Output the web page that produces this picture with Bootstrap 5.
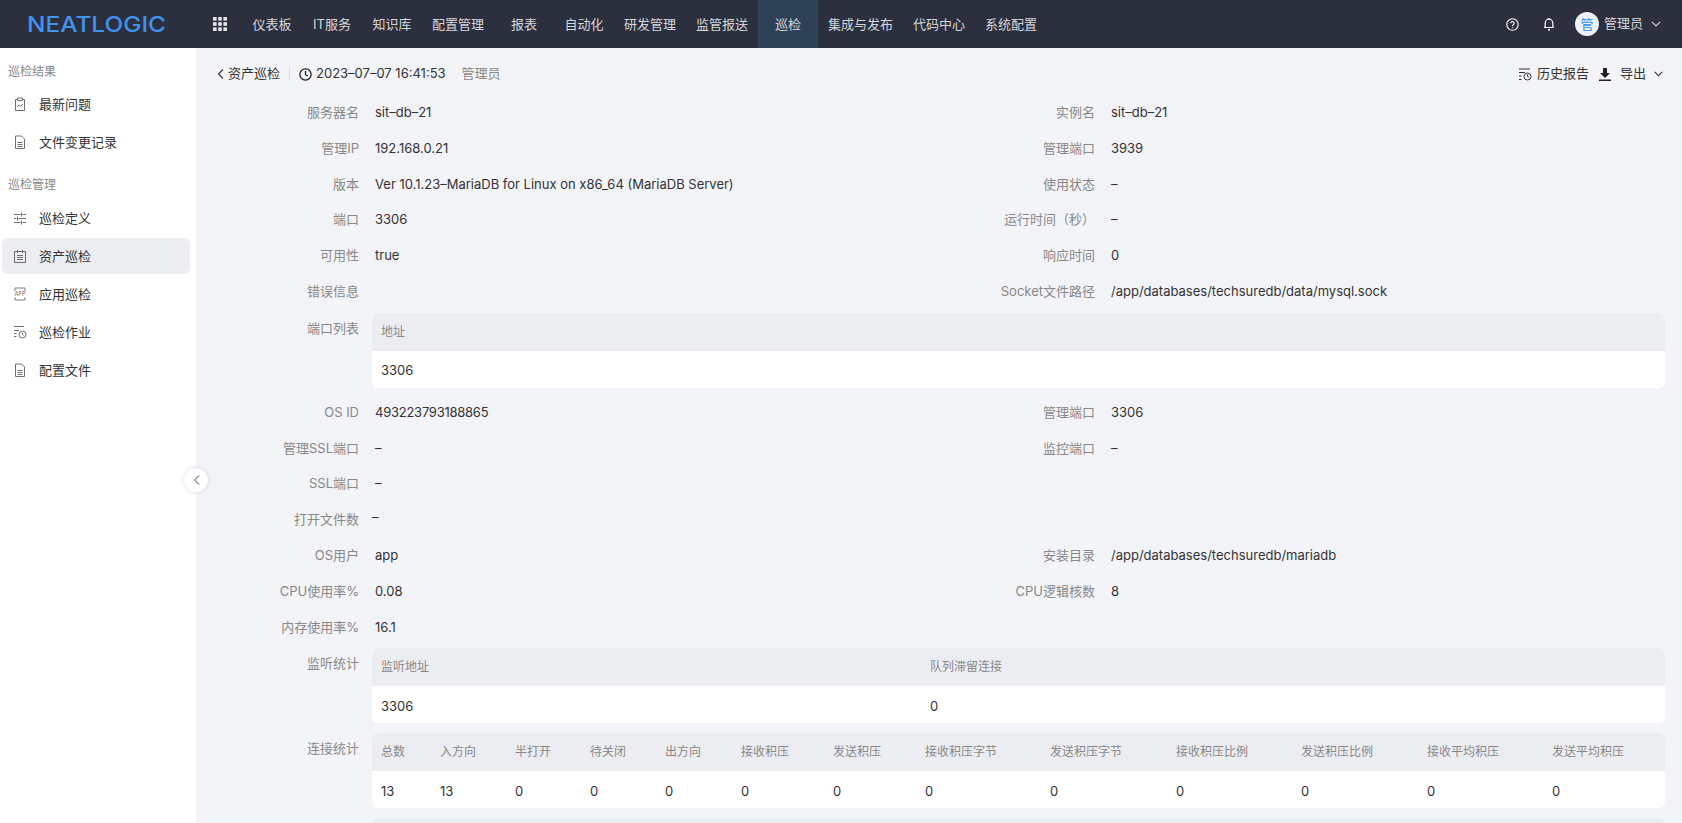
<!DOCTYPE html>
<html lang="zh-CN">
<head>
<meta charset="utf-8">
<title>资产巡检</title>
<link href="https://cdn.jsdelivr.net/npm/bootstrap@5.3.0/dist/css/bootstrap.min.css" rel="stylesheet">
<style>
html,body{height:100%;overflow:hidden}
body{font-family:Inter,"Noto Sans CJK SC",sans-serif;font-size:13px;color:#333;background:#f3f4f8;line-height:1.5}
svg{display:block;flex:none}
.topbar{height:48px;background:#2c2f3e;color:#d6d7db;padding:0}
.logo-box{width:196px;padding-left:27px}
.logo-text{font-family:Inter,sans-serif;font-size:22px;font-weight:500;fill:#4193ee}
.grid-ico{width:46px;padding-left:17px}
.topitem{min-width:60px;padding:0 10px;height:48px;line-height:48px;text-align:center;color:#d6d7db;text-decoration:none;white-space:nowrap}
.topitem.on{background:#2f4156}
.top-right{margin-left:auto;padding-right:21px}
.av{width:24px;height:24px;border-radius:50%;background:#eef1f5;color:#2d8cf0;text-align:center;line-height:24px;margin-left:20px;margin-right:5px}
.shell{height:775px}
.sidebar{width:196px;flex:none;background:#fff;padding:0 6px 0 2px;position:relative}
.side-head{color:#888;font-size:12px;padding-left:6px;line-height:18px;padding-top:1px}
.side-head.a{margin-top:14px;margin-bottom:5px}
.side-head.b{margin-top:15px;margin-bottom:6px}
.side-link{display:flex;align-items:center;height:36px;margin-bottom:2px;padding-left:11px;gap:8px;color:#333;text-decoration:none;border-radius:6px}
.side-link.on{background:#ecedf1}
.side-link svg{color:#6f6f6f}
.side-text{margin-left:4px;padding-top:1px}
.app-mark{font-family:Inter,sans-serif;font-size:5.5px;fill:currentColor}
.fold{position:absolute;right:-12px;top:420px;width:24px;height:24px;background:#fff;border-radius:50%;box-shadow:0 0 5px rgba(0,0,0,.15);display:flex;align-items:center;justify-content:center}
.mainpane{flex:1;min-width:0;padding:0 5px 0 9px}
.subbar{height:50px;padding:2px 14px 0 12px}
.back{gap:4px}
.sep{width:1px;height:14px;background:#dcdde2;margin:0 9px}
.muted-x{color:#888}
.tool{gap:5px}
.export{margin-left:10px}
.long-num{letter-spacing:-.25px}
.kv{height:35.8px;display:flex;white-space:nowrap}
.kv-label{width:154px;text-align:right;color:#888;line-height:28px;flex:none}
.kv-value{margin-left:16px;line-height:28px}
.kv-value.tight{margin-left:13px;line-height:24px}
.kv-wide{display:flex;margin-bottom:10px}
.kv-wide .kv-label{line-height:30px}
.tbl-wrap{flex:1;margin:0 12px 0 13px;border-radius:6px;overflow:hidden;background:#fff;min-width:0}
.tbl-wrap .table{margin:0;--bs-table-bg:transparent;font-size:13px;color:#333;table-layout:fixed}
.tbl-wrap th{background:#ecedf1;height:38px;font-weight:400;font-size:12px;color:#888;padding:0 9px;border:0;vertical-align:middle;white-space:nowrap}
.tbl-wrap td{height:37px;padding:3px 9px 0;border:0;vertical-align:middle;color:#333;background:#fff}
.listen-tbl th:nth-child(1){width:549px}
.conn-tbl th:nth-child(1){width:59px}
.conn-tbl th:nth-child(2),.conn-tbl th:nth-child(3),.conn-tbl th:nth-child(4){width:75px}
.conn-tbl th:nth-child(5){width:76px}
.conn-tbl th:nth-child(6),.conn-tbl th:nth-child(7){width:92px}
.conn-tbl th:nth-child(8),.conn-tbl th:nth-child(10),.conn-tbl th:nth-child(12){width:125px}
.conn-tbl th:nth-child(9),.conn-tbl th:nth-child(11){width:126px}
</style>
</head>
<body>
<nav class="navbar topbar navbar-expand flex-nowrap">
  <div class="logo-box">
    <svg width="150" height="32" viewBox="0 0 150 32"><text class="logo-text" x="0" y="24" textLength="139" lengthAdjust="spacingAndGlyphs">NEATLOGIC</text></svg>
  </div>
  <div class="grid-ico">
    <svg width="14" height="14" viewBox="0 0 14 14" fill="#e6e7ea"><rect width="3.6" height="3.6"/><rect x="5.2" width="3.6" height="3.6"/><rect x="10.4" width="3.6" height="3.6"/><rect y="5.2" width="3.6" height="3.6"/><rect x="5.2" y="5.2" width="3.6" height="3.6"/><rect x="10.4" y="5.2" width="3.6" height="3.6"/><rect y="10.4" width="3.6" height="3.6"/><rect x="5.2" y="10.4" width="3.6" height="3.6"/><rect x="10.4" y="10.4" width="3.6" height="3.6"/></svg>
  </div>
  <div class="d-flex">
    <a class="topitem" href="#">仪表板</a><a class="topitem" href="#">IT服务</a><a class="topitem" href="#">知识库</a><a class="topitem" href="#">配置管理</a><a class="topitem" href="#">报表</a><a class="topitem" href="#">自动化</a><a class="topitem" href="#">研发管理</a><a class="topitem" href="#">监管报送</a><a class="topitem on" href="#">巡检</a><a class="topitem" href="#">集成与发布</a><a class="topitem" href="#">代码中心</a><a class="topitem" href="#">系统配置</a>
  </div>
  <div class="top-right d-flex align-items-center">
    <svg width="13" height="13" viewBox="0 0 13 13" fill="none" stroke="#fff" stroke-width="1.1"><circle cx="6.5" cy="6.5" r="5.7"/><path d="M4.8 5.2a1.7 1.7 0 1 1 2.6 1.4c-.6.4-.9.7-.9 1.3"/><path d="M6.5 9.2v.9"/></svg>
    <svg class="ms-4" width="12" height="14" viewBox="0 0 12 14" fill="none" stroke="#fff" stroke-width="1.2"><path d="M1 10.5h10M2.2 10.5V6a3.8 3.8 0 0 1 7.6 0v4.5"/><path d="M5 12.7h2" stroke-width="1.4"/><path d="M6 1v1"/></svg>
    <span class="av">管</span><span>管理员</span>
    <svg class="ms-2" width="10" height="6" viewBox="0 0 10 6" fill="none" stroke="#d6d7db" stroke-width="1.1"><path d="M.8.8 5 5l4.2-4.2"/></svg>
  </div>
</nav>
<div class="shell d-flex">
  <aside class="sidebar">
    <div class="side-head a">巡检结果</div>
    <a class="side-link" href="#"><svg width="14" height="14" viewBox="0 0 14 14" fill="none" stroke="currentColor"><path d="M4.500 2.500H2.500v11h9v-11H9.500M4.500 1h5v2.500h-5z"/><path d="M4 10l2-2 1.500 1L10 7"/></svg><span class="side-text">最新问题</span></a>
    <a class="side-link" href="#"><svg width="14" height="14" viewBox="0 0 14 14" fill="none" stroke="currentColor"><path d="M2.500 1h6l3 3v9.500h-9zM4.500 7.500h5M4.500 9.500h5M4.500 11.500h5"/></svg><span class="side-text">文件变更记录</span></a>
    <div class="side-head b">巡检管理</div>
    <a class="side-link" href="#"><svg width="14" height="14" viewBox="0 0 14 14" fill="none" stroke="currentColor"><path d="M1 3.500h6.500M9.500 3.500h3.500M1 7.500h2.500M5.500 7.500h7.500M1 11.500h6.500M9.500 11.500h3.500M8.500 1.500v4M4.500 5.500v4M8.500 9.500v4"/></svg><span class="side-text">巡检定义</span></a>
    <a class="side-link on" href="#"><svg width="14" height="14" viewBox="0 0 14 14" fill="none" stroke="currentColor"><path d="M1.500 2.500h11v11h-11zM4.500 1v3M9.500 1v3M4 6.500h6M4 8.500h6M4 10.500h6"/></svg><span class="side-text">资产巡检</span></a>
    <a class="side-link" href="#"><svg width="14" height="14" viewBox="0 0 14 14" fill="none" stroke="currentColor" stroke-width=".9"><path d="M2 4V1h10v3M2 10v3h10v-3"/><text class="app-mark" x="7" y="9" text-anchor="middle" stroke="none">APP</text></svg><span class="side-text">应用巡检</span></a>
    <a class="side-link" href="#"><svg width="14" height="14" viewBox="0 0 14 14" fill="none" stroke="currentColor"><path d="M1 1.500h10M1 5.500h5M1 8.500h2.500M1 11.500h2.500"/><circle cx="9.500" cy="9.500" r="3.500"/><path d="M9.500 7.500v2l1.300.8"/></svg><span class="side-text">巡检作业</span></a>
    <a class="side-link" href="#"><svg width="14" height="14" viewBox="0 0 14 14" fill="none" stroke="currentColor"><path d="M2.500 1h6l3 3v9.500h-9zM4.500 7.500h5M4.500 9.500h5M4.500 11.500h5"/></svg><span class="side-text">配置文件</span></a>
    <div class="fold"><svg width="7" height="10" viewBox="0 0 7 10" fill="none" stroke="#444" stroke-width="1"><path d="M6 .5 1.500 5 6 9.500"/></svg></div>
  </aside>
  <main class="mainpane">
    <div class="subbar d-flex align-items-center justify-content-between">
      <div class="d-flex align-items-center">
        <span class="back d-flex align-items-center"><svg width="7" height="10" viewBox="0 0 7 10" fill="none" stroke="#333" stroke-width="1.100"><path d="M6 .5 1.500 5 6 9.500"/></svg>资产巡检</span>
        <span class="sep"></span>
        <svg width="13" height="13" viewBox="0 0 13 13" fill="none" stroke="#222" stroke-width="1.300"><circle cx="6.500" cy="6.500" r="5.600"/><path d="M6.500 3v3.700l2.300 1.300"/></svg>
        <span class="ms-1">2023–07–07 16:41:53</span>
        <span class="muted-x ms-3">管理员</span>
      </div>
      <div class="d-flex align-items-center">
        <span class="tool d-flex align-items-center"><svg width="13" height="13" viewBox="0 0 13 13" fill="none" stroke="#333"><path d="M0 1h11M0 4.500h6M0 8h2.500M0 11.500h2.500"/><circle cx="8.500" cy="8.500" r="3.500"/><path d="M8.500 6.500v2l1.300.7"/></svg>历史报告</span>
        <span class="tool export d-flex align-items-center"><svg width="12" height="13" viewBox="0 0 12 13" fill="#222"><path d="M4 0h4v5h3L6 10 1 5h3zM0 11.500h12V13H0z"/></svg><span class="ms-1">导出</span></span>
        <svg class="ms-2" width="9" height="6" viewBox="0 0 9 6" fill="none" stroke="#333" stroke-width="1.100"><path d="M.7.800 4.500 4.600 8.300.8"/></svg>
      </div>
    </div>

    <div class="row g-0">
      <div class="col-6 kv"><div class="kv-label">服务器名</div><div class="kv-value">sit–db–21</div></div>
      <div class="col-6 kv"><div class="kv-label">实例名</div><div class="kv-value">sit–db–21</div></div>
      <div class="col-6 kv"><div class="kv-label">管理IP</div><div class="kv-value">192.168.0.21</div></div>
      <div class="col-6 kv"><div class="kv-label">管理端口</div><div class="kv-value">3939</div></div>
      <div class="col-6 kv"><div class="kv-label">版本</div><div class="kv-value">Ver 10.1.23–MariaDB for Linux on x86_64 (MariaDB Server)</div></div>
      <div class="col-6 kv"><div class="kv-label">使用状态</div><div class="kv-value">–</div></div>
      <div class="col-6 kv"><div class="kv-label">端口</div><div class="kv-value">3306</div></div>
      <div class="col-6 kv"><div class="kv-label">运行时间（秒）</div><div class="kv-value">–</div></div>
      <div class="col-6 kv"><div class="kv-label">可用性</div><div class="kv-value">true</div></div>
      <div class="col-6 kv"><div class="kv-label">响应时间</div><div class="kv-value">0</div></div>
      <div class="col-6 kv"><div class="kv-label">错误信息</div><div class="kv-value"></div></div>
      <div class="col-6 kv"><div class="kv-label">Socket文件路径</div><div class="kv-value">/app/databases/techsuredb/data/mysql.sock</div></div>
    </div>

    <div class="kv-wide"><div class="kv-label">端口列表</div>
      <div class="tbl-wrap"><table class="table"><thead><tr><th>地址</th></tr></thead><tbody><tr><td>3306</td></tr></tbody></table></div>
    </div>

    <div class="row g-0">
      <div class="col-6 kv"><div class="kv-label">OS ID</div><div class="kv-value long-num">493223793188865</div></div>
      <div class="col-6 kv"><div class="kv-label">管理端口</div><div class="kv-value">3306</div></div>
      <div class="col-6 kv"><div class="kv-label">管理SSL端口</div><div class="kv-value">–</div></div>
      <div class="col-6 kv"><div class="kv-label">监控端口</div><div class="kv-value">–</div></div>
      <div class="col-6 kv"><div class="kv-label">SSL端口</div><div class="kv-value">–</div></div>
      <div class="col-6 kv"></div>
      <div class="col-12 kv"><div class="kv-label">打开文件数</div><div class="kv-value tight">–</div></div>
      <div class="col-6 kv"><div class="kv-label">OS用户</div><div class="kv-value">app</div></div>
      <div class="col-6 kv"><div class="kv-label">安装目录</div><div class="kv-value">/app/databases/techsuredb/mariadb</div></div>
      <div class="col-6 kv"><div class="kv-label">CPU使用率%</div><div class="kv-value">0.08</div></div>
      <div class="col-6 kv"><div class="kv-label">CPU逻辑核数</div><div class="kv-value">8</div></div>
      <div class="col-12 kv"><div class="kv-label">内存使用率%</div><div class="kv-value">16.1</div></div>
    </div>

    <div class="kv-wide"><div class="kv-label">监听统计</div>
      <div class="tbl-wrap"><table class="table listen-tbl"><thead><tr><th>监听地址</th><th>队列滞留连接</th></tr></thead><tbody><tr><td>3306</td><td>0</td></tr></tbody></table></div>
    </div>
    <div class="kv-wide"><div class="kv-label">连接统计</div>
      <div class="tbl-wrap"><table class="table conn-tbl"><thead><tr><th>总数</th><th>入方向</th><th>半打开</th><th>待关闭</th><th>出方向</th><th>接收积压</th><th>发送积压</th><th>接收积压字节</th><th>发送积压字节</th><th>接收积压比例</th><th>发送积压比例</th><th>接收平均积压</th><th>发送平均积压</th></tr></thead><tbody><tr><td>13</td><td>13</td><td>0</td><td>0</td><td>0</td><td>0</td><td>0</td><td>0</td><td>0</td><td>0</td><td>0</td><td>0</td><td>0</td></tr></tbody></table></div>
    </div>
    <div class="kv-wide"><div class="kv-label"></div>
      <div class="tbl-wrap"><table class="table"><thead><tr><th>&nbsp;</th></tr></thead></table></div>
    </div>
  </main>
</div>
</body>
</html>
